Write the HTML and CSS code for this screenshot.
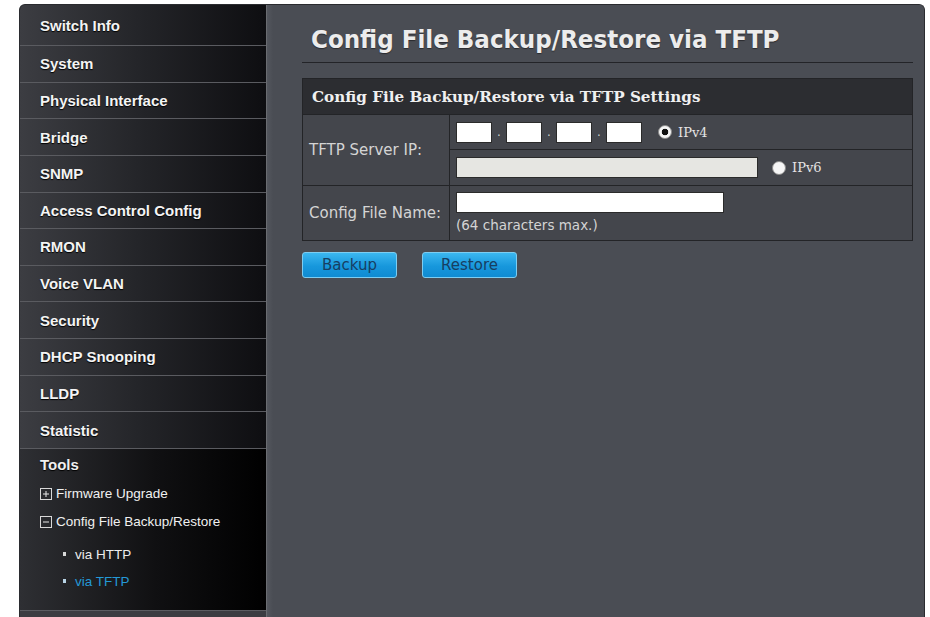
FILE: index.html
```html
<!DOCTYPE html>
<html lang="en">
<head>
<meta charset="utf-8">
<title>Config File Backup/Restore via TFTP</title>
<link rel="stylesheet" href="styles.css">
</head>
<body>
<div class="frame">
  <aside class="sidebar">
    <ul class="nav">
      <li class="nav-item">Switch Info</li>
      <li class="nav-item">System</li>
      <li class="nav-item">Physical Interface</li>
      <li class="nav-item">Bridge</li>
      <li class="nav-item">SNMP</li>
      <li class="nav-item">Access Control Config</li>
      <li class="nav-item">RMON</li>
      <li class="nav-item">Voice VLAN</li>
      <li class="nav-item">Security</li>
      <li class="nav-item">DHCP Snooping</li>
      <li class="nav-item">LLDP</li>
      <li class="nav-item">Statistic</li>
    </ul>
    <div class="tools">
      <div class="tools-title">Tools</div>
      <div class="tree">
        <div class="tree-item">
          <svg class="tree-box" width="12" height="12" viewBox="0 0 12 12"><rect x="0.5" y="0.5" width="11" height="11" fill="none" stroke="#d8d8d8"/><path d="M3 6h6M6 3v6" stroke="#e8e8e8" stroke-width="1"/></svg>
          <span>Firmware Upgrade</span>
        </div>
        <div class="tree-item">
          <svg class="tree-box" width="12" height="12" viewBox="0 0 12 12"><rect x="0.5" y="0.5" width="11" height="11" fill="none" stroke="#d8d8d8"/><path d="M3 6h6" stroke="#e8e8e8" stroke-width="1"/></svg>
          <span>Config File Backup/Restore</span>
        </div>
      </div>
      <ul class="sub">
        <li class="sub-item">via HTTP</li>
        <li class="sub-item sub-active">via TFTP</li>
      </ul>
    </div>
    <div class="sidebar-foot"></div>
  </aside>

  <main class="main">
    <h1 class="page-title">Config File Backup/Restore via TFTP</h1>

    <table class="settings">
      <tr>
        <th class="settings-head" colspan="2">Config File Backup/Restore via TFTP Settings</th>
      </tr>
      <tr class="row-v4">
        <td class="label" rowspan="2">TFTP Server IP:</td>
        <td class="value">
          <div class="ip-line">
            <input class="octet" type="text">
            <span class="sep">.</span>
            <input class="octet" type="text">
            <span class="sep">.</span>
            <input class="octet" type="text">
            <span class="sep">.</span>
            <input class="octet" type="text">
            <span class="radio radio-on"></span>
            <span class="ver">IPv4</span>
          </div>
        </td>
      </tr>
      <tr class="row-v6">
        <td class="value">
          <div class="ip-line">
            <input class="v6" type="text" disabled>
            <span class="radio radio-v6"></span>
            <span class="ver">IPv6</span>
          </div>
        </td>
      </tr>
      <tr class="row-file">
        <td class="label">Config File Name:</td>
        <td class="value value-file">
          <input class="file" type="text">
          <div class="note">(64 characters max.)</div>
        </td>
      </tr>
    </table>

    <div class="actions">
      <button class="btn" type="button">Backup</button>
      <button class="btn" type="button">Restore</button>
    </div>
  </main>
</div>
</body>
</html>
```

FILE: styles.css
```css
* {
  box-sizing: border-box;
}

body {
  margin: 0;
  background: #ffffff;
  font-family: "DejaVu Sans", sans-serif;
}

/* outer window */
.frame {
  display: flex;
  width: 906px;
  height: 613px;
  margin: 4px 0 0 19px;
  border: 1px solid #2a2b2f;
  border-bottom: 0;
  border-radius: 6px 6px 0 0;
  overflow: hidden;
  background: #4a4d54;
}

/* left navigation */
.sidebar {
  width: 247px;
  flex: none;
  display: flex;
  flex-direction: column;
  border-right: 1px solid #6a6c71;
  background: #111114;
}

.nav {
  list-style: none;
  margin: 0;
  padding: 0;
}

.nav-item {
  height: 36.64px;
  display: flex;
  align-items: center;
  padding-left: 20px;
  border-top: 1px solid #5a5b60;
  background: linear-gradient(90deg, #3c3d42 0%, #232428 50%, #0e0e11 100%);
  color: #f4f4f4;
  font: bold 15px "Liberation Sans", Arial, sans-serif;
  text-shadow: 0 1px 1px #000;
}

.nav-item:first-child {
  height: 40px;
  border-top: 0;
  padding-top: 1px;
}

.tools {
  height: 162px;
  flex: none;
  padding: 7px 0 0 20px;
  border-top: 1px solid #5a5b60;
  background: linear-gradient(90deg, #2e2f33 0%, #101012 55%, #000000 100%);
  color: #f0f0f0;
  font-family: "Liberation Sans", Arial, sans-serif;
}

.tools-title {
  font-weight: bold;
  font-size: 15px;
  line-height: 18px;
  text-shadow: 0 1px 1px #000;
}

.tree {
  margin-top: 6px;
}

.tree-item {
  display: flex;
  align-items: center;
  height: 28px;
  font-size: 13.5px;
}

.tree-box {
  flex: none;
  margin-right: 4px;
}

.sub {
  list-style: none;
  margin: 5px 0 0;
  padding: 0 0 0 23px;
}

.sub-item {
  display: flex;
  align-items: center;
  height: 27px;
  font-size: 13.5px;
  color: #ececec;
}

.sub-item::before {
  content: "";
  width: 3px;
  height: 4px;
  margin-right: 9px;
  background: #d8d8d8;
}

.sub-active {
  color: #2499d6;
}

.sub-active::before {
  background: #b8d4e6;
}

.sidebar-foot {
  flex: 1;
  border-top: 1px solid #5c5d62;
  background: #3c3d42;
}

/* content area */
.main {
  flex: 1;
  padding: 0 11px 0 35px;
  background: linear-gradient(90deg, #54575e 0px, #4a4d54 6px);
}

.page-title {
  margin: 0;
  padding: 18px 0 7px 9px;
  font: bold 25.6px/32px "DejaVu Sans Condensed", "DejaVu Sans", sans-serif;
  font-stretch: condensed;
  color: #ececec;
  text-shadow: 0 1px 1px #2a2b2f;
  border-bottom: 1px solid #232428;
}

.settings {
  width: 100%;
  margin-top: 15px;
  border-collapse: collapse;
  border: 1px solid #232427;
  background: #44464c;
}

.settings-head {
  height: 36px;
  padding: 0 0 0 9px;
  text-align: left;
  background: #2c2d31;
  color: #f0f0f0;
  font: bold 15.2px "DejaVu Serif", serif;
  border-bottom: 1px solid #232427;
}

.label {
  width: 147px;
  padding: 0 0 0 6px;
  color: #d4d4d4;
  font-size: 15px;
  border-right: 1px solid #232427;
  border-bottom: 1px solid #232427;
}

.value {
  padding: 0 0 0 6px;
  border-bottom: 1px solid #232427;
}

.row-v4 .value {
  height: 35px;
}

.row-v6 .value {
  height: 36px;
}

.row-file td {
  height: 55px;
  border-bottom: 0;
}

.ip-line {
  display: flex;
  align-items: center;
}

input {
  margin: 0;
  height: 21px;
  border: 1px solid #2b2b2b;
  background: #ffffff;
  font: 13px "DejaVu Sans", sans-serif;
}

.octet {
  width: 36px;
}

.sep {
  width: 14px;
  text-align: center;
  color: #d0d0d0;
  font-size: 12px;
  line-height: 12px;
}

.v6 {
  width: 302px;
  background: #e6e6e2;
}

.radio {
  width: 14px;
  height: 14px;
  flex: none;
  border-radius: 50%;
  border: 1px solid #8a8a8a;
  background: #f6f6f6;
}

.radio-on {
  margin-left: 16px;
  background: radial-gradient(circle, #111 0, #111 3px, #f6f6f6 3.6px);
}

.radio-v6 {
  margin-left: 14px;
}

.ver {
  margin-left: 6px;
  color: #e4e4e4;
  font: 13px "DejaVu Serif", serif;
}

.value-file {
  vertical-align: top;
  padding-top: 6px;
}

.file {
  display: block;
  width: 268px;
}

.note {
  margin-top: 4px;
  color: #d4d4d4;
  font-size: 13.5px;
  line-height: 16px;
}

.actions {
  display: flex;
  gap: 25px;
  margin-top: 11px;
}

.btn {
  width: 95px;
  height: 26px;
  padding: 0;
  border: 1px solid #7ccdf2;
  border-radius: 3px;
  background: linear-gradient(#3bb7f0, #1797dc 55%, #0f8bd2);
  color: #173e62;
  font: 15px "DejaVu Sans", sans-serif;
}
```
